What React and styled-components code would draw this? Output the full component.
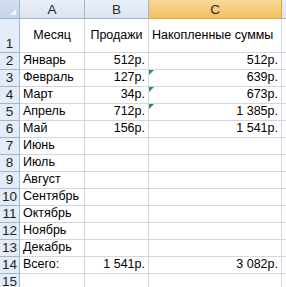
import React from "react";
import styled, { createGlobalStyle, css } from "styled-components";

const Global = createGlobalStyle`
  html, body { margin: 0; padding: 0; background: #fff; }
  body { font-family: "Liberation Sans", Arial, sans-serif; }
`;

const Sheet = styled.div`
  width: 286px;
  height: 287px;
  overflow: hidden;
  display: grid;
  grid-template-columns: 20px 65px 64px 133px 1fr;
  grid-template-rows: 19px 34px repeat(14, 17px);
  font-size: 12.5px;
  color: #000;
  background: #fff;
`;

const Corner = styled.div`
  position: relative;
  box-sizing: border-box;
  background: linear-gradient(#d4def0, #c3d2ea);
  border-right: 1px solid #9eb6ce;
  border-bottom: 1px solid #9eb6ce;

  &::after {
    content: "";
    position: absolute;
    right: 3px;
    bottom: 3px;
    border-left: 6px solid transparent;
    border-bottom: 6px solid #f2f5fb;
  }
`;

const ColHeader = styled.div`
  box-sizing: border-box;
  display: flex;
  align-items: center;
  justify-content: center;
  color: #2b2b2b;
  font-size: 13.5px;
  background: linear-gradient(#eaf0f8, #dbe4f1);
  border-right: 1px solid #9eb6ce;
  border-bottom: 1px solid #9eb6ce;

  ${(p) =>
    p.$selected &&
    css`
      background: linear-gradient(#f9d99a, #f1c05e);
      border-right-color: #e0a93d;
      border-bottom-color: #e0a93d;
    `}
`;

const RowHeader = styled.div`
  box-sizing: border-box;
  display: flex;
  align-items: flex-end;
  justify-content: center;
  padding-bottom: 1px;
  font-size: 13.5px;
  line-height: 15px;
  color: #1f1f1f;
  background: #e4ecf7;
  border-right: 1px solid #9eb6ce;
  border-bottom: 1px solid #9eb6ce;
`;

const Cell = styled.div`
  position: relative;
  box-sizing: border-box;
  display: flex;
  align-items: ${(p) => (p.$tall ? "center" : "flex-end")};
  justify-content: ${(p) =>
    p.$align === "right" ? "flex-end" : p.$align === "center" ? "center" : "flex-start"};
  padding: 0 3px 1px 3px;
  white-space: nowrap;
  line-height: 15px;
  border-right: 1px solid #d0d7e5;
  border-bottom: 1px solid #d0d7e5;

  ${(p) =>
    p.$flag &&
    css`
      &::before {
        content: "";
        position: absolute;
        left: 0;
        top: 0;
        border-top: 5px solid #1f9a37;
        border-right: 5px solid transparent;
      }
    `}
`;

const columns = ["A", "B", "C", ""];

const rows = [
  ["Январь", "512р.", "512р."],
  ["Февраль", "127р.", "639р.", true],
  ["Март", "34р.", "673р.", true],
  ["Апрель", "712р.", "1 385р.", true],
  ["Май", "156р.", "1 541р."],
  ["Июнь", "", ""],
  ["Июль", "", ""],
  ["Август", "", ""],
  ["Сентябрь", "", ""],
  ["Октябрь", "", ""],
  ["Ноябрь", "", ""],
  ["Декабрь", "", ""],
  ["Всего:", "1 541р.", "3 082р."],
];

export default function App() {
  return (
    <>
      <Global />
      <Sheet>
        <Corner />
        {columns.map((c, i) => (
          <ColHeader key={i} $selected={c === "C"}>
            {c}
          </ColHeader>
        ))}

        <RowHeader>1</RowHeader>
        <Cell $tall $align="center">Месяц</Cell>
        <Cell $tall $align="center">Продажи</Cell>
        <Cell $tall>Накопленные суммы</Cell>
        <Cell $tall />

        {rows.map(([month, sales, total, flag], i) => (
          <React.Fragment key={month}>
            <RowHeader>{i + 2}</RowHeader>
            <Cell>{month}</Cell>
            <Cell $align="right">{sales}</Cell>
            <Cell $align="right" $flag={flag}>
              {total}
            </Cell>
            <Cell />
          </React.Fragment>
        ))}

        <RowHeader>15</RowHeader>
        <Cell />
        <Cell />
        <Cell />
        <Cell />
      </Sheet>
    </>
  );
}
